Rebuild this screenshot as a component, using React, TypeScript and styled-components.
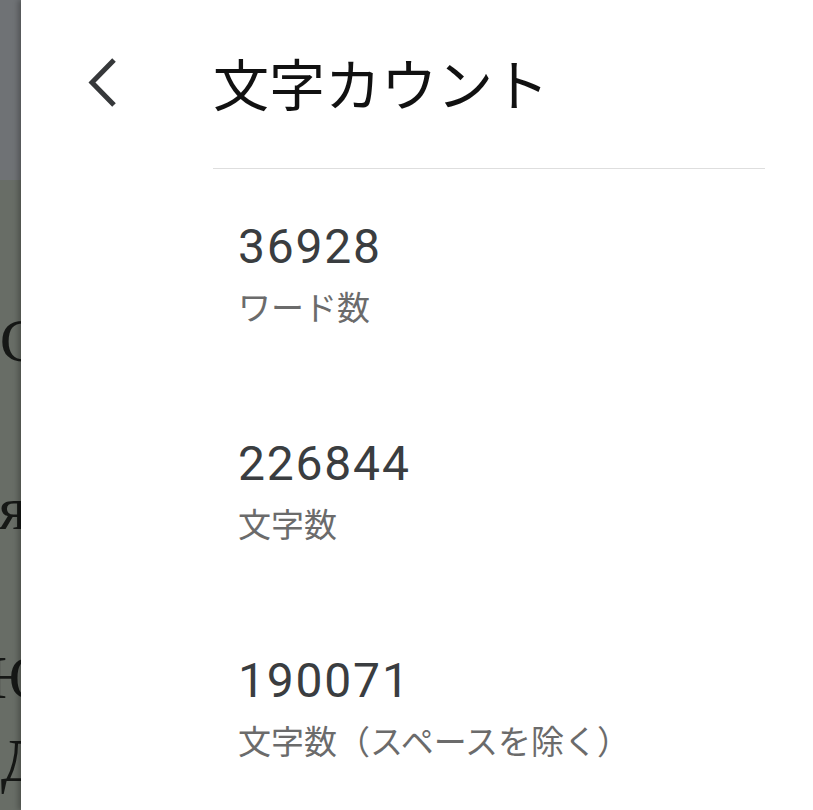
import React from "react";
import styled, { createGlobalStyle } from "styled-components";

const GlobalStyle = createGlobalStyle`
  html, body {
    margin: 0;
    padding: 0;
    background: #ffffff;
    overflow: hidden;
  }
  body {
    font-family: "Noto Sans CJK JP", "Noto Sans", sans-serif;
  }
`;

const counts = [
  { value: "36928", label: "ワード数" },
  { value: "226844", label: "文字数" },
  { value: "190071", label: "文字数（スペースを除く）" },
];

// edges of the page text that peek out from behind the drawer
const backdropLines = [
  { text: "С", top: 309, cut: 20 },
  { text: "я", top: 477, cut: 6 },
  { text: "Ю", top: 646, cut: 30 },
  { text: "Д", top: 729, cut: 22 },
];

function App() {
  return (
    <>
      <GlobalStyle />
      <Screen>
        <Backdrop>
          <BackdropTop />
          <BackdropPage>
            {backdropLines.map((line) => (
              <BackdropLine key={line.text} $top={line.top} $cut={line.cut}>
                {line.text}
              </BackdropLine>
            ))}
          </BackdropPage>
        </Backdrop>
        <Panel>
          <Header>
            <BackCell>
              <BackButton aria-label="戻る">
                <svg width="32" height="52" viewBox="0 0 32 52">
                  <path
                    d="M27 3 L5 25.5 L27 48"
                    fill="none"
                    stroke="#36383a"
                    strokeWidth="5"
                  />
                </svg>
              </BackButton>
            </BackCell>
            <Title>文字カウント</Title>
          </Header>
          <List>
            {counts.map((c) => (
              <Item key={c.label}>
                <Value>{c.value}</Value>
                <Label>{c.label}</Label>
              </Item>
            ))}
          </List>
        </Panel>
      </Screen>
    </>
  );
}

const Screen = styled.div`
  display: flex;
  width: 813px;
  height: 810px;
  overflow: hidden;
`;

const Backdrop = styled.div`
  width: 21px;
  flex-shrink: 0;
  display: flex;
  flex-direction: column;
`;

const BackdropTop = styled.div`
  height: 180px;
  background: #6f7275;
`;

const BackdropPage = styled.div`
  position: relative;
  flex: 1;
  background: #686d66;
  overflow: hidden;
`;

const BackdropLine = styled.div<{ $top: number; $cut: number }>`
  position: absolute;
  top: ${(p) => p.$top - 180}px;
  right: ${(p) => -p.$cut}px;
  font-family: "Liberation Serif", serif;
  font-size: 62px;
  line-height: 62px;
  color: #161816;
  white-space: nowrap;
`;

const Panel = styled.div`
  flex: 1;
  background: #ffffff;
  box-shadow: -3px 0 5px rgba(0, 0, 0, 0.25);
  z-index: 1;
  display: flex;
  flex-direction: column;
`;

const Header = styled.div`
  display: grid;
  grid-template-columns: 192px 1fr;
  align-items: center;
  height: 168px;
`;

const BackCell = styled.div`
  padding-left: 66px;
  display: flex;
  align-items: center;
`;

const BackButton = styled.button`
  border: none;
  background: none;
  padding: 0;
  display: flex;
  cursor: pointer;
  margin-top: -2px;
`;

const Title = styled.h1`
  margin: -4px 0 0;
  font-family: "Noto Sans CJK JP", sans-serif;
  font-weight: 400;
  font-size: 56px;
  line-height: 1;
  color: #111111;
`;

const List = styled.div`
  margin-left: 192px;
  width: 552px;
  border-top: 1px solid #dedede;
  padding-top: 50px;
  display: flex;
  flex-direction: column;
  gap: 110px;
`;

const Item = styled.div`
  padding-left: 25px;
  display: flex;
  flex-direction: column;
  gap: 11px;
`;

const Value = styled.div`
  font-family: Roboto, "Liberation Sans", sans-serif;
  font-size: 48px;
  line-height: 56px;
  letter-spacing: 1.8px;
  color: #3a3d40;
`;

const Label = styled.div`
  font-family: "Noto Sans CJK JP", sans-serif;
  font-size: 33px;
  line-height: 40px;
  color: #6b6b6b;
`;

export default App;
